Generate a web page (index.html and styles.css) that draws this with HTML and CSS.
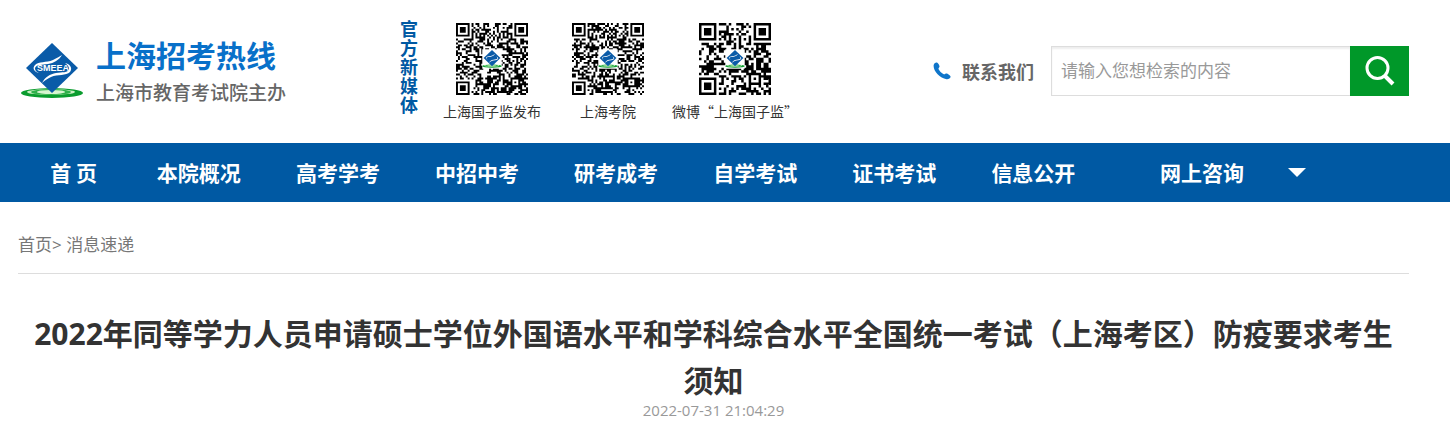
FILE: index.html
```
<!DOCTYPE html>
<html lang="zh-CN">
<head>
    <meta charset="UTF-8">
    <meta name="viewport" content="width=device-width, initial-scale=1.0">
    <title>上海招考热线</title>
    <link rel="stylesheet" href="styles.css">
</head>
<body>
    <!-- Header -->
    <header class="header container">
        <a class="logo" href="#">
            <svg class="logo-mark" viewBox="0 0 64 56" aria-hidden="true">
                <!-- The shape is reused in the middle of the QR codes -->
                <g id="mark">
                    <ellipse cx="32" cy="50" rx="31" ry="5" fill="#0a9c2e"/>
                    <ellipse cx="31" cy="49" rx="24" ry="3" fill="#c9efc0"/>
                    <ellipse cx="31" cy="49" rx="20" ry="3" fill="#2fb04a"/>
                    <ellipse cx="31" cy="49" rx="14" ry="2" fill="#d8f5d0"/>
                    <path d="M32 0 L58 25 L32 50 L6 25 Z" fill="#0a5ba8"/>
                    <path d="M19 30 C14 29 12 25 15 22 C19 18 26 20 33 17 C37 15 40 13 42 12 C39 17 34 20 28 21 C22 22 17 21 15 25 C15 27 16 29 19 30 Z" fill="#fff"/>
                    <path d="M45 20 C50 21 53 25 50 29 C46 33 38 31 31 34 C27 36 24 38 22 40 C25 34 30 31 36 30 C42 29 48 30 49 26 C49 24 48 22 45 20 Z" fill="#fff"/>
                </g>
                <text x="33" y="28" class="mark-text">SMEEA</text>
            </svg>
            <span class="logo-text">
                <span class="logo-name">上海招考热线</span>
                <span class="logo-host">上海市教育考试院主办</span>
            </span>
        </a>

        <div class="media">
            <p class="media-title">官方新媒体</p>
            <figure class="qr">
                <svg class="qr-code" data-size="37" data-seed="11"></svg>
                <figcaption>上海国子监发布</figcaption>
            </figure>
            <figure class="qr">
                <svg class="qr-code" data-size="37" data-seed="29"></svg>
                <figcaption>上海考院</figcaption>
            </figure>
            <figure class="qr">
                <svg class="qr-code" data-size="29" data-seed="47"></svg>
                <figcaption>微博“上海国子监”</figcaption>
            </figure>
        </div>

        <div class="tools">
            <a class="contact" href="#">
                <svg class="phone" viewBox="0 0 18 18" aria-hidden="true">
                    <path d="M.7 3 C1 1.5 2.6 .2 4 .6 C5.3 1.2 6.7 3.6 6.5 4.8 C6.3 5.8 5.3 6 5.5 7 C6 8.6 8.8 11.4 10.8 12.2 C11.8 12.5 12.2 11.5 13.3 11.5 C14.7 11.6 17.5 13.5 17.6 14.8 C17.5 16.4 15.4 17.5 13.6 17.3 C6.5 16.3 -.3 8.5 .7 3 Z" fill="#0f75ca"/>
                </svg>
                联系我们
            </a>
            <form class="search">
                <input type="text" aria-label="检索" placeholder="请输入您想检索的内容">
                <button type="submit" aria-label="搜索">
                    <svg viewBox="0 0 30 30" aria-hidden="true">
                        <circle cx="12.5" cy="12" r="10.5" fill="none" stroke="#fff" stroke-width="3"/>
                        <path d="M19.5 19.5 L28 28" stroke="#fff" stroke-width="4"/>
                    </svg>
                </button>
            </form>
        </div>
    </header>

    <!-- Main navigation -->
    <nav class="nav">
        <ul class="nav-list container">
            <li class="home"><a href="#">首 页</a></li>
            <li><a href="#">本院概况</a></li>
            <li><a href="#">高考学考</a></li>
            <li><a href="#">中招中考</a></li>
            <li><a href="#">研考成考</a></li>
            <li><a href="#">自学考试</a></li>
            <li><a href="#">证书考试</a></li>
            <li><a href="#">信息公开</a></li>
            <li class="more"><a href="#">网上咨询</a><span class="arrow"></span></li>
        </ul>
    </nav>

    <!-- Article -->
    <main class="container">
        <div class="breadcrumb"><a href="#">首页</a>&gt; <a href="#">消息速递</a></div>
        <h1>2022年同等学力人员申请硕士学位外国语水平和学科综合水平全国统一考试（上海考区）防疫要求考生须知</h1>
        <p class="date">2022-07-31 21:04:29</p>
    </main>

    <script src="qr.js"></script>
</body>
</html>
```
FILE: styles.css
```
body {
    margin: 0;
    background: #fff;
    color: #333;
    font-family: "Noto Sans CJK SC", sans-serif;
}

a {
    color: inherit;
    text-decoration: none;
}

.container {
    margin: 0 41px 0 18px;
}

/* Header */
.header {
    display: flex;
    align-items: flex-start;
    height: 143px;
}

.logo {
    display: flex;
    padding: 35px 0 0 2px;
    gap: 12px;
}

.logo-mark {
    width: 64px;
    height: 56px;
    margin-top: 8px;
}

.mark-text {
    font: bold 9px "Liberation Sans", sans-serif;
    fill: #fff;
    text-anchor: middle;
}

.logo-text {
    display: flex;
    flex-direction: column;
}

.logo-name {
    color: #0870c9;
    font-size: 30px;
    font-weight: bold;
    line-height: 38px;
}

.logo-host {
    color: #666;
    font-size: 19px;
    font-weight: 500;
    line-height: 38px;
}

/* QR codes of the official accounts */
.media {
    display: flex;
    margin-left: 114px;
}

.media-title {
    width: 18px;
    margin: 19px 22px 0 0;
    color: #0059a3;
    font-size: 18px;
    font-weight: bold;
    line-height: 19px;
}

.qr {
    display: flex;
    flex-direction: column;
    align-items: center;
    min-width: 104px;
    margin: 23px 12px 0 0;
    font-size: 14px;
    line-height: 32px;
}

.qr-code {
    width: 72px;
    height: 72px;
}

/* Contact link and search */
.tools {
    display: flex;
    align-items: center;
    margin: 46px 0 0 auto;
}

.contact {
    display: flex;
    align-items: center;
    gap: 11px;
    margin-right: 17px;
    color: #666;
    font-size: 18px;
    font-weight: bold;
}

.phone {
    width: 18px;
    height: 18px;
}

.search {
    display: flex;
    height: 50px;
}

.search input {
    box-sizing: border-box;
    width: 299px;
    padding: 0 9px 4px;
    border: 1px solid #ddd;
    border-right: none;
    box-shadow: inset 0 2px 2px #eee;
    font-family: inherit;
    font-size: 17px;
}

.search input::placeholder {
    color: #999;
}

.search button {
    width: 59px;
    padding: 0;
    border: none;
    background: #009829;
    cursor: pointer;
}

.search svg {
    display: block;
    width: 30px;
    height: 30px;
    margin: 0 auto;
}

/* Navigation bar */
.nav {
    background: #0059a3;
}

.nav-list {
    display: flex;
    padding: 0;
    list-style: none;
}

.nav-list li {
    width: 10%;
    color: #fff;
    font-size: 21px;
    font-weight: bold;
    line-height: 59px;
    text-align: center;
}

.nav-list .home {
    width: 8%;
}

.nav-list .more {
    display: flex;
    align-items: center;
    gap: 44px;
    padding-left: 57px;
}

.arrow {
    border: 9px solid transparent;
    border-top-color: #fff;
    border-bottom: none;
}

.more a {
    white-space: nowrap;
}

/* Article */
.breadcrumb {
    border-bottom: 1px solid #ddd;
    padding: 24px 0 10px;
    color: #777;
    font-family: "Open Sans", "Noto Sans CJK SC", sans-serif;
    font-size: 17px;
    line-height: 37px;
}

h1 {
    margin: 0;
    padding: 36px 10px 0;
    font-family: "Open Sans", "Noto Sans CJK SC", sans-serif;
    font-size: 30px;
    line-height: 47px;
    text-align: center;
}

.date {
    margin: 0;
    color: #999;
    font-family: "Open Sans", "Noto Sans CJK SC", sans-serif;
    font-size: 15px;
    line-height: 12px;
    text-align: center;
}
```
FILE: qr.js
```
// Draws the QR codes: three finder squares, one alignment square, data modules
function inFinder(x, y, n) {
    return (x < 8 && y < 8) || (x > n - 9 && y < 8) || (x < 8 && y > n - 9);
}

function ring(x, y, size) {
    return `M${x} ${y}h${size}v${size}h-${size}z` +
        `M${x + 1} ${y + 1}v${size - 2}h${size - 2}v-${size - 2}z` +
        `M${x + 2} ${y + 2}h${size - 4}v${size - 4}h-${size - 4}z`;
}

document.querySelectorAll('.qr-code').forEach(svg => {
    const n = Number(svg.dataset.size);
    let seed = Number(svg.dataset.seed);
    const random = () => {
        seed = (seed * 16807) % 2147483647;
        return seed / 2147483647;
    };
    for (let i = 0; i < 10; i++) random();

    let path = ring(0, 0, 7) + ring(n - 7, 0, 7) + ring(0, n - 7, 7) + ring(n - 9, n - 9, 5);
    for (let y = 0; y < n; y++) {
        for (let x = 0; x < n; x++) {
            const align = x >= n - 9 && x < n - 4 && y >= n - 9 && y < n - 4;
            if (inFinder(x, y, n) || align) continue;
            const dark = (x === 6 || y === 6) ? (x + y) % 2 === 0 : random() < 0.52;
            if (dark) path += `M${x} ${y}h1v1h-1z`;
        }
    }

    // Logo plate in the middle
    const plate = n * 0.27;
    const start = (n - plate) / 2;
    svg.setAttribute('viewBox', `0 0 ${n} ${n}`);
    svg.innerHTML = `<path d="${path}" fill="#000"/>
        <rect x="${start}" y="${start}" width="${plate}" height="${plate}" fill="#fff"/>
        <svg x="${start}" y="${start}" width="${plate}" height="${plate}" viewBox="2 -2 60 60">
            <use href="#mark"/>
        </svg>`;
});
```
